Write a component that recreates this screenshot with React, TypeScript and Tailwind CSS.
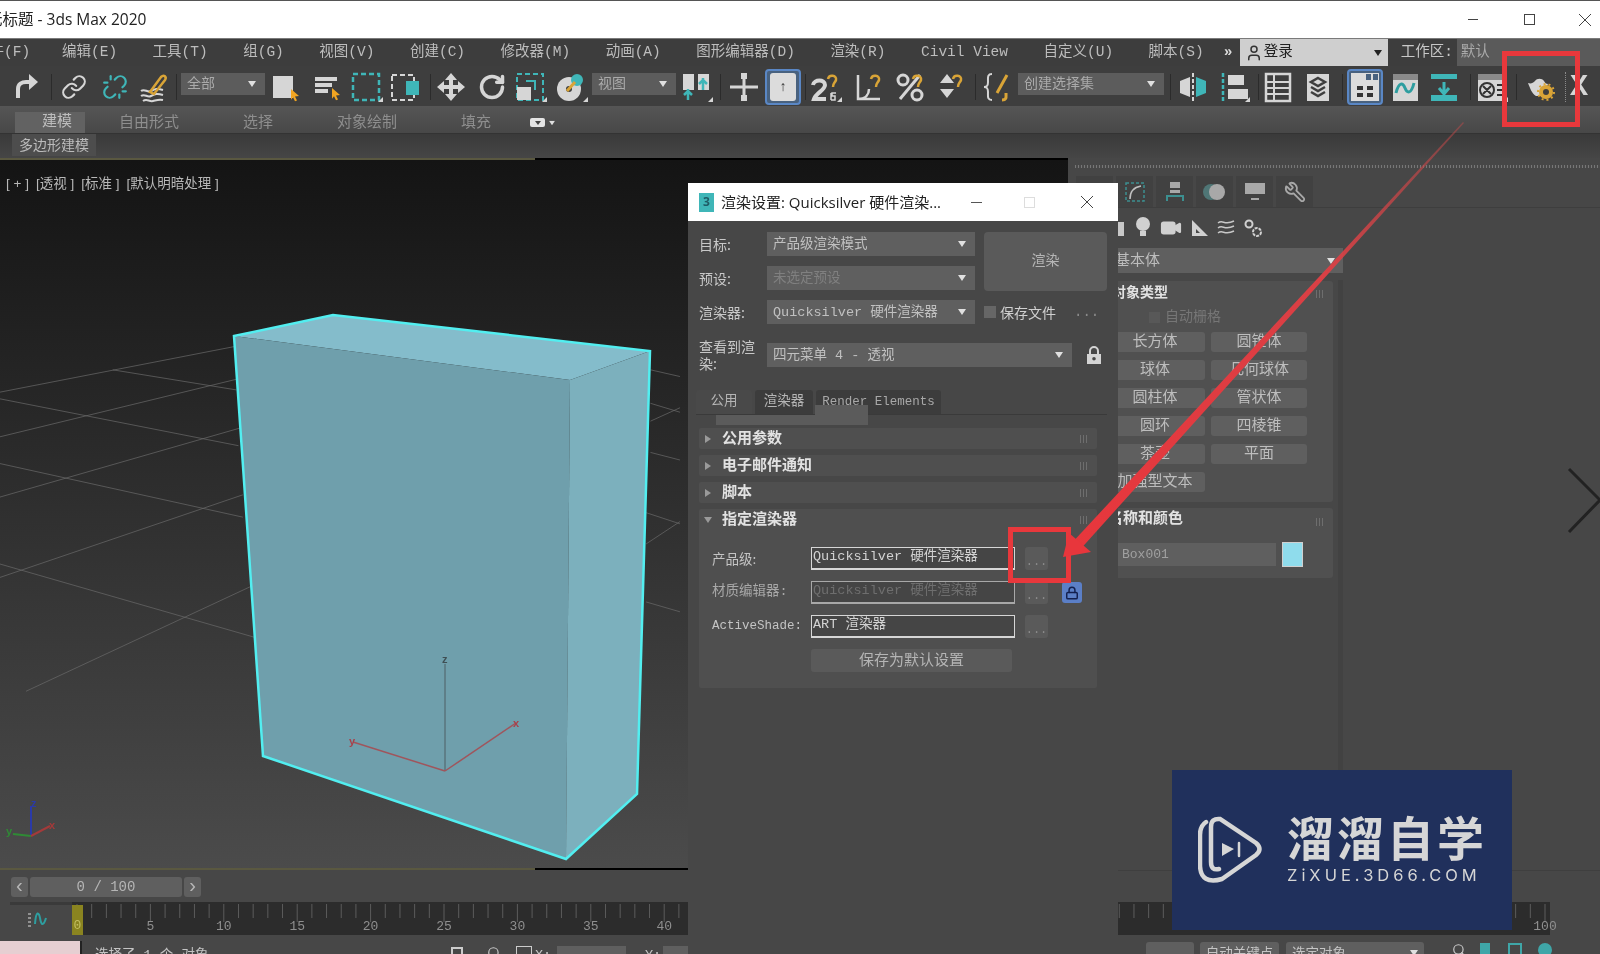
import type { ReactNode } from "react";
import { Link, Lock, RotateCw, Search, Unlink, User, Video, Wrench } from "lucide-react";

const TEAL = "#3fb6b8";
const GOLD = "#d9a437";
const LIGHT = "#d6d6d6";

const GRID_LINES = [
  [0, 520, 540, 418], [0, 620, 550, 490], [0, 755, 555, 600], [0, 935, 560, 750], [60, 1190, 590, 950],
  [0, 535, 550, 640], [0, 680, 560, 800], [0, 905, 590, 1070], [260, 470, 545, 515],
  [1500, 470, 1568, 485], [1500, 545, 1568, 565], [1500, 655, 1568, 672], [1490, 790, 1568, 815],
  [1490, 990, 1568, 1012], [1490, 860, 1568, 810], [1500, 585, 1568, 555],
];

const RULER_LABELS = [5, 10, 15, 20, 25, 30, 35, 40, 100];
const FRAME_PX = 14.68;

function Caret({ className = "" }: { className?: string }) {
  return (
    <svg width="8" height="6" viewBox="0 0 8 6" className={className}>
      <path d="M0 0h8L4 6z" fill="#e0e0e0" />
    </svg>
  );
}

function Tool({ className = "", children }: { className?: string; children: ReactNode }) {
  return (
    <div className={`flex h-[32px] w-[36px] shrink-0 items-center justify-center ${className}`}>
      <svg width="36" height="32" viewBox="0 0 36 32" fill="none">
        {children}
      </svg>
    </div>
  );
}

function LucideTool({ className = "", children }: { className?: string; children: ReactNode }) {
  return <div className={`flex h-[32px] w-[36px] shrink-0 items-center justify-center ${className}`}>{children}</div>;
}

function Sep({ className = "" }: { className?: string }) {
  return <div className={`h-[26px] w-px shrink-0 bg-[#2b2b2b] ${className}`} />;
}

function Pick({ x = 24, y = 21 }: { x?: number; y?: number }) {
  return <path d={`M${x} ${y}l8 7-4 .5 2 4-2 .8-2-4-2 2.5z`} fill="#f2a521" />;
}

function Corner() {
  return <path d="M35 31h-5l5-5z" fill={LIGHT} />;
}

function ToolDrop({ text, className }: { text: string; className: string }) {
  return (
    <div className={`flex h-[22px] shrink-0 -translate-y-[3px] items-center justify-between bg-[#5c5c5c] pl-[6px] pr-[9px] text-[14px] text-[#aaaaaa] ${className}`}>
      <span>{text}</span>
      <Caret />
    </div>
  );
}

function Toolbar() {
  return (
    <div className="flex h-[41px] items-center overflow-hidden border-b border-[#555555] bg-[#3e3e3e] pt-[2px]">
      <Tool className="-ml-[28px]">
        <path d="M26 27v-9c0-5-4-7-8-7h-5" stroke={LIGHT} strokeWidth="4" />
        <path d="M15 3l-9 8 9 8z" fill={LIGHT} />
      </Tool>
      <Tool className="ml-0">
        <path d="M10 27v-9c0-5 4-7 8-7h5" stroke={LIGHT} strokeWidth="4" />
        <path d="M21 3l9 8-9 8z" fill={LIGHT} />
      </Tool>
      <Sep className="ml-[7px]" />
      <LucideTool className="ml-[4px]"><Link size={26} color={LIGHT} /></LucideTool>
      <LucideTool className="ml-[5px]"><Unlink size={26} color={TEAL} /></LucideTool>
      <Tool className="ml-[2px]">
        <path d="M6 20c4-3 6 2 10 0s6-3 12-1M6 25c4-3 6 2 10 0s6-3 12-1M8 30c4-3 6 1 10 0s6-2 10-1" stroke={LIGHT} strokeWidth="2" />
        <path d="M15 21L26 6c3-3 6 0 4 3L19 23z" stroke={GOLD} strokeWidth="2.5" />
      </Tool>
      <Sep className="ml-[5px]" />
      <ToolDrop text="全部" className="ml-[4px] w-[84px]" />
      <Tool>
        <rect x="8" y="5" width="20" height="22" fill={LIGHT} />
        <Pick x={26} y={18} />
      </Tool>
      <Tool className="ml-[7px]">
        <path d="M7 6h22v4H7zM7 12h17v4H7zM7 18h13v4H7z" fill={LIGHT} />
        <Pick x={24} y={17} />
      </Tool>
      <Tool className="ml-[4px]">
        <rect x="5" y="3" width="26" height="26" stroke={TEAL} strokeWidth="2.5" strokeDasharray="5 3" />
        <Corner />
      </Tool>
      <Tool className="ml-[3px]">
        <rect x="5" y="4" width="22" height="25" stroke={LIGHT} strokeWidth="2" strokeDasharray="5 3" />
        <rect x="19" y="10" width="13" height="14" fill={TEAL} />
      </Tool>
      <Sep className="ml-[7px]" />
      <Tool className="ml-[2px]">
        <path d="M18 2l6 7h-4v5h5v-4l7 6-7 6v-4h-5v5h4l-6 7-6-7h4v-5h-5v4l-7-6 7-6v4h5V9h-4z" fill={LIGHT} />
      </Tool>
      <LucideTool className="ml-[5px]"><RotateCw size={28} color={LIGHT} strokeWidth={3} /></LucideTool>
      <Tool className="ml-[2px]">
        <rect x="5" y="3" width="26" height="26" stroke={TEAL} strokeWidth="2" strokeDasharray="5 3" />
        <rect x="5" y="16" width="14" height="13" fill={LIGHT} />
        <path d="M14 10h9v9" stroke={TEAL} strokeWidth="2" />
        <Corner />
      </Tool>
      <Tool className="ml-[5px]">
        <circle cx="16" cy="18" r="12" fill={LIGHT} />
        <circle cx="16" cy="18" r="3" fill="#3e3e3e" />
        <circle cx="24" cy="9" r="6" fill={TEAL} />
        <path d="M14 20l8-9" stroke={GOLD} strokeWidth="3" />
        <Corner />
      </Tool>
      <ToolDrop text="视图" className="ml-[3px] w-[84px]" />
      <Tool className="ml-[2px]">
        <path d="M5 3h11v16H5zM20 3h11v16H20z" fill={LIGHT} />
        <path d="M10 18v11M6 24l4-4 4 4M25 7v12M21 13l4-4 4 4" stroke={TEAL} strokeWidth="2.5" />
        <Corner />
      </Tool>
      <Sep className="ml-[6px]" />
      <Tool className="ml-[5px]">
        <path d="M4 16h28M18 3v26" stroke={LIGHT} strokeWidth="3" />
        <rect x="15" y="2" width="6" height="6" fill={LIGHT} />
        <rect x="15" y="24" width="6" height="6" fill={LIGHT} />
      </Tool>
      <div className="ml-[3px] flex h-[36px] w-[36px] shrink-0 items-center justify-center rounded-[4px] border-2 border-[#5a87c5] bg-[#49627f]">
        <div className="flex h-[28px] w-[26px] items-center justify-center rounded-[3px] bg-[#dcdcdc] text-[14px] font-bold leading-none text-[#333333]">↑</div>
      </div>
      <Sep className="ml-[4px]" />
      <Tool className="ml-[1px]">
        <path d="M6 14c1-6 12-6 12 0 0 5-9 8-11 14h12" stroke={LIGHT} strokeWidth="4" />
        <path d="M21 8c1-5 9-4 8 1-1 3-3 3-3 7" stroke={GOLD} strokeWidth="2.5" />
        <path d="M24 22v7M29 22h-4v3h3v4h-4" stroke={LIGHT} strokeWidth="1.5" />
        <Corner />
      </Tool>
      <Tool className="ml-[7px]">
        <path d="M8 4v24h22M8 28c8 0 11-5 11-10" stroke={LIGHT} strokeWidth="2.5" />
        <path d="M21 8c1-5 9-4 8 1-1 3-3 3-3 7" stroke={GOLD} strokeWidth="2.5" />
      </Tool>
      <Tool className="ml-[6px]">
        <circle cx="11" cy="9" r="5" stroke={LIGHT} strokeWidth="3" />
        <circle cx="25" cy="24" r="5" stroke={LIGHT} strokeWidth="3" />
        <path d="M8 28L28 4" stroke={LIGHT} strokeWidth="3" />
        <path d="M21 8c1-5 9-4 8 1-1 3-3 3-3 7" stroke={GOLD} strokeWidth="2.5" />
      </Tool>
      <Tool className="ml-[4px]">
        <path d="M8 12l7-9 7 9zM8 18l7 9 7-9z" fill={LIGHT} />
        <path d="M21 8c1-5 9-4 8 1-1 3-3 3-3 7" stroke={GOLD} strokeWidth="2.5" />
      </Tool>
      <Sep className="ml-[7px]" />
      <Tool className="ml-[3px]">
        <path d="M13 3c-5 0-4 4-4 8s-1 5-4 5c3 0 4 1 4 5s-1 8 4 8" stroke={LIGHT} strokeWidth="2" />
        <path d="M18 22L28 4M23 29c5 0 4-3 4-7" stroke={GOLD} strokeWidth="3" />
      </Tool>
      <ToolDrop text="创建选择集" className="ml-[3px] w-[146px]" />
      <Sep className="ml-[6px]" />
      <Tool className="ml-[4px]">
        <path d="M15 6L5 10v12l10 4z" fill={LIGHT} />
        <path d="M21 6l10 4v12l-10 4z" fill={TEAL} />
        <path d="M18 2v28" stroke={LIGHT} strokeWidth="2" strokeDasharray="4 2" />
      </Tool>
      <Tool className="ml-[4px]">
        <path d="M8 2v28" stroke={TEAL} strokeWidth="2.5" strokeDasharray="4 2" />
        <rect x="13" y="4" width="16" height="10" fill={LIGHT} />
        <rect x="13" y="18" width="20" height="10" fill={LIGHT} />
        <Corner />
      </Tool>
      <Sep className="ml-[7px]" />
      <Tool className="ml-[1px]">
        <rect x="6" y="3" width="24" height="27" stroke={LIGHT} strokeWidth="2.5" />
        <path d="M6 11h24M6 17h24M6 23h24M14 3v27" stroke={LIGHT} strokeWidth="2" />
      </Tool>
      <Tool className="ml-[4px]">
        <rect x="7" y="3" width="22" height="27" fill={LIGHT} />
        <path d="M18 7l7 4-7 4-7-4zM11 16l7 4 7-4M11 21l7 4 7-4" stroke="#3e3e3e" strokeWidth="2.5" />
      </Tool>
      <Sep className="ml-[6px]" />
      <div className="ml-[4px] flex h-[36px] w-[36px] shrink-0 items-center justify-center rounded-[4px] border-2 border-[#5a87c5] bg-[#49627f]">
        <svg width="30" height="30" viewBox="0 0 30 30" fill="none">
          <rect x="1" y="1" width="28" height="28" fill="#dcdcdc" />
          <path d="M7 14h6v4H7zM17 14h6v4h-6zM7 21h6v4H7zM17 21h6v4h-6z" fill="#333333" />
          <path d="M16 2h5v6h-5zM23 2h5v6h-5z" fill="#49627f" />
        </svg>
      </div>
      <Tool className="ml-[4px]">
        <rect x="6" y="3" width="25" height="27" fill={LIGHT} />
        <rect x="6" y="3" width="25" height="6" fill="#8a8a8a" />
        <path d="M9 22c3-12 7-10 9-5s6 7 9-5" stroke="#2e9ea0" strokeWidth="3" />
      </Tool>
      <Tool className="ml-[3px]">
        <path d="M5 3h26v5H5z" fill={TEAL} />
        <path d="M18 11v10M13 17l5 6 5-6" stroke={TEAL} strokeWidth="3" />
        <path d="M5 24h26v6H5z" fill={TEAL} />
      </Tool>
      <Sep className="ml-[8px]" />
      <Tool className="ml-[2px]">
        <rect x="5" y="3" width="26" height="27" fill={LIGHT} />
        <rect x="5" y="3" width="26" height="6" fill="#8a8a8a" />
        <circle cx="14" cy="19" r="7" stroke="#333333" strokeWidth="2" />
        <path d="M10 15l8 8M18 15l-8 8M24 14h6M24 19h6M24 24h6" stroke="#333333" strokeWidth="2" />
        <Corner />
      </Tool>
      <Sep className="ml-[7px]" />
      <Tool className="ml-[5px]">
        <path d="M6 12c3 1 5 0 7-2 2-3 7-3 9 0 1 2 2 3 4 3l-3 6-1 6h-8c-4-2-6-8-8-13z" fill={LIGHT} />
        <circle cx="24" cy="21" r="7" fill={GOLD} />
        <circle cx="24" cy="21" r="3" fill="#3e3e3e" />
        <circle cx="24" cy="21" r="8" stroke={GOLD} strokeWidth="2" strokeDasharray="2 3" />
      </Tool>
      <div className="ml-[7px] h-[30px] w-px shrink-0 border-l border-dotted border-[#8a8a8a]" />
      <div className="ml-[4px] w-[36px] shrink-0 text-[30px] font-bold leading-none text-[#d6d6d6]">X</div>
    </div>
  );
}

function MenuBar() {
  const items = ["编辑(E)", "工具(T)", "组(G)", "视图(V)", "创建(C)", "修改器(M)", "动画(A)", "图形编辑器(D)", "渲染(R)", "Civil View", "自定义(U)", "脚本(S)"];
  return (
    <div className="flex h-[28px] items-center overflow-hidden border-t border-[#7a7a7a] bg-[#3d3d3d] text-[14.5px] text-[#bdbdbd]">
      <span className="-ml-[25px] w-[87px] shrink-0">文件(F)</span>
      <div className="flex shrink-0 gap-[35.5px]">
        {items.map((item) => (
          <span key={item}>{item}</span>
        ))}
      </div>
      <span className="ml-[20px] w-[16px] shrink-0 font-bold text-[#dddddd]">»</span>
      <div className="flex h-[28px] w-[148px] shrink-0 items-center bg-[#cfcfcf] pl-[5px] pr-[6px] text-[#222222]">
        <User size={18} color="#333333" />
        <span className="ml-[1px] flex-1">登录</span>
        <svg width="8" height="6" viewBox="0 0 8 6"><path d="M0 0h8L4 6z" fill="#222222" /></svg>
      </div>
      <span className="ml-[13px] w-[56px] shrink-0 text-[#c8c8c8]">工作区:</span>
      <div className="flex h-[28px] flex-1 items-center bg-[#5a5a5a] pl-[4px] text-[#aaaaaa]">默认</div>
    </div>
  );
}

function RibbonTabs() {
  return (
    <>
      <div className="flex h-[26px] items-end bg-[linear-gradient(#555555,#484848)] pl-[15px] text-[15px] leading-[23px] text-[#8e8e8e]">
        <div className="flex h-[21px] w-[70px] items-center justify-center bg-[#626262] pl-[14px] text-[#bdbdbd]">建模</div>
        <span className="ml-[34px] h-[21px]">自由形式</span>
        <span className="ml-[64px] h-[21px]">选择</span>
        <span className="ml-[64px] h-[21px]">对象绘制</span>
        <span className="ml-[64px] h-[21px]">填充</span>
        <div className="mb-[6px] ml-[39px] flex items-center gap-[3px]">
          <div className="flex h-[9px] w-[15px] items-center justify-center rounded-[2px] bg-[#e4e4e4]">
            <div className="h-0 w-0 border-x-[3px] border-t-[4px] border-x-transparent border-t-[#444444]" />
          </div>
          <Caret className="scale-75" />
        </div>
      </div>
      <div className="flex h-[25px] items-start border-t border-[#333333] bg-[linear-gradient(#3a3a3a,#464646)] pl-[12px]">
        <div className="flex h-[22px] w-[84px] items-center justify-center bg-[#4d4d4d] pt-[2px] text-[14px] text-[#bbbbbb]">多边形建模</div>
      </div>
    </>
  );
}

function Viewport() {
  return (
    <div className="flex h-[712px] flex-col bg-[#151515]">
      <div className="flex h-[2px] shrink-0">
        <div className="w-[535px] bg-[#5a5840]" />
        <div className="flex-1 bg-black" />
      </div>
      <div className="relative flex-1 bg-[linear-gradient(#141414,#4b4b4b)]">
        <svg width="1068" height="708" viewBox="0 160 1068 708" className="absolute inset-0">
          {GRID_LINES.map(([a, b, c, d]) => (
            <line
              key={`${a}-${b}-${c}`}
              x1={a / 2.306}
              y1={b / 2.24 + 160}
              x2={c / 2.306}
              y2={d / 2.24 + 160}
              stroke="#6a6a6a"
              strokeWidth="1"
              opacity="0.7"
            />
          ))}
          <polygon points="234,336 333,315 650,351 570,380" fill="#84bccb" />
          <polygon points="234,336 570,380 566,859 263,756" fill="#6f9fac" />
          <polygon points="570,380 650,351 637,794 566,859" fill="#7cb0bd" />
          <polygon points="234,336 333,315 650,351 637,794 566,859 263,756" fill="none" stroke="#52eef0" strokeWidth="2.5" />
          <line x1="445" y1="771" x2="445" y2="664" stroke="#4f5f64" strokeWidth="1" />
          <line x1="445" y1="771" x2="516" y2="723" stroke="#a0555c" strokeWidth="1.5" />
          <line x1="445" y1="771" x2="353" y2="742" stroke="#a0555c" strokeWidth="1.5" />
          <text x="442" y="663" fontSize="11" fontWeight="700" fill="#3f4f54" fontFamily="Liberation Sans">z</text>
          <text x="513" y="727" fontSize="11" fontWeight="700" fill="#a8414b" fontFamily="Liberation Sans">x</text>
          <text x="349" y="745" fontSize="11" fontWeight="700" fill="#a8414b" fontFamily="Liberation Sans">y</text>
          <line x1="31" y1="836" x2="31" y2="806" stroke="#2a3aa8" strokeWidth="2" />
          <line x1="31" y1="836" x2="13" y2="834" stroke="#2f8a35" strokeWidth="2" />
          <line x1="31" y1="836" x2="50" y2="826" stroke="#a33a3a" strokeWidth="2" />
          <text x="31" y="807" fontSize="11" fontWeight="700" fill="#2a3aa8" fontFamily="Liberation Sans">z</text>
          <text x="6" y="835" fontSize="11" fontWeight="700" fill="#2f8a35" fontFamily="Liberation Sans">y</text>
          <text x="49" y="829" fontSize="11" fontWeight="700" fill="#a33a3a" fontFamily="Liberation Sans">x</text>
        </svg>
        <div className="absolute left-[6px] top-[14px] flex gap-[7px] font-['Liberation_Sans','Noto_Sans_CJK_SC',sans-serif] text-[13.5px] text-[#b8b8b8]">
          <span>[ + ]</span>
          <span>[透视 ]</span>
          <span>[标准 ]</span>
          <span>[默认明暗处理 ]</span>
        </div>
      </div>
      <div className="flex h-[2px] shrink-0">
        <div className="w-[535px] bg-[#5a5840]" />
        <div className="flex-1 bg-black" />
      </div>
    </div>
  );
}

function TimeSlider() {
  return (
    <div className="flex h-[32px] items-start gap-[2px] bg-[#474747] pl-[11px] pt-[7px] text-[14px] text-[#b5b5b5]">
      <div className="flex h-[20px] w-[17px] items-center justify-center rounded-[3px] bg-[#5f5f5f] text-[20px]">‹</div>
      <div className="flex h-[20px] w-[152px] items-center justify-center rounded-[3px] bg-[#5f5f5f]">0 / 100</div>
      <div className="flex h-[20px] w-[17px] items-center justify-center rounded-[3px] bg-[#5f5f5f] text-[20px]">›</div>
    </div>
  );
}

function Ruler() {
  return (
    <div className="flex h-[33px] bg-[#474747] pl-[10px]">
      <div className="flex w-[62px] items-center justify-center border-t-[3px] border-[#3a3a3a]">
        <svg width="24" height="20" viewBox="0 0 24 20" fill="none" className="-translate-x-[3px]">
          <path d="M2 4h3M2 8h3M2 12h3M2 16h3" stroke="#aaaaaa" strokeWidth="1.5" />
          <path d="M9 14c1-14 4-12 5-6s3 10 6 0" stroke="#2e9ea0" strokeWidth="2" />
        </svg>
      </div>
      <div className="relative w-[1478px] bg-[#2c2c2c] text-[13px] text-[#8f8f8f]">
        <svg width="1478" height="33" className="absolute inset-0">
          {Array.from({ length: 101 }, (_, i) => (
            <line key={i} x1={5 + i * FRAME_PX} y1="2" x2={5 + i * FRAME_PX} y2={i % 5 === 0 ? 20 : 16} stroke="#5c5c5c" strokeWidth="1" />
          ))}
        </svg>
        {RULER_LABELS.map((n) => (
          <span key={n} className="absolute top-[15px] -translate-x-1/2" style={{ left: 5 + n * FRAME_PX }}>
            {n}
          </span>
        ))}
        <div className="absolute left-0 top-[3px] flex h-[30px] w-[11px] items-end justify-center bg-[#8a8420] text-[13px] text-[#c2bd60]">0</div>
      </div>
    </div>
  );
}

function StatusBar() {
  return (
    <div className="mt-[2px] flex h-[17px] items-start overflow-hidden bg-[#474747] text-[13.5px] text-[#c4c4c4]">
      <div className="mt-[4px] h-[13px] w-[82px] shrink-0 border-r-2 border-[#222222] bg-[#e6cfd2]" />
      <span className="ml-[13px] mt-[9px] w-[340px] shrink-0 leading-[20px]">选择了 1 个 对象</span>
      <div className="ml-[16px] mt-[10px] h-[12px] w-[12px] border-x-2 border-t-2 border-[#cccccc]" />
      <Search size={14} color="#cccccc" className="ml-[24px] mt-[9px]" />
      <div className="ml-[15px] mt-[9px] h-[13px] w-[16px] border border-[#cccccc]" />
      <span className="ml-[3px] mt-[9px] w-[22px] leading-[20px]">X:</span>
      <div className="mt-[9px] h-[14px] w-[69px] bg-[#5f5f5f]" />
      <span className="ml-[19px] mt-[9px] w-[18px] leading-[20px]">Y:</span>
      <div className="mt-[9px] h-[14px] w-[69px] bg-[#5f5f5f]" />
      <span className="ml-[370px] mt-[9px] w-[40px] leading-[20px]">M</span>
      <div className="ml-[4px] mt-[5px] h-[17px] w-[48px] rounded-t-[3px] bg-[#5f5f5f]" />
      <div className="ml-[6px] mt-[5px] flex h-[17px] w-[79px] items-start justify-center rounded-t-[3px] bg-[#5f5f5f] pt-[3px]">自动关键点</div>
      <div className="ml-[7px] mt-[5px] flex h-[17px] w-[138px] items-start justify-between rounded-t-[3px] bg-[#5f5f5f] px-[6px] pt-[3px]">
        选定对象
        <Caret className="mt-[5px]" />
      </div>
      <Search size={14} color="#cccccc" className="ml-[28px] mt-[6px]" />
      <div className="ml-[14px] mt-[6px] h-[14px] w-[10px] bg-[#3fa6a8]" />
      <div className="ml-[18px] mt-[6px] h-[14px] w-[14px] border-2 border-[#3fa6a8]" />
      <div className="ml-[16px] mt-[6px] h-[14px] w-[14px] rounded-full bg-[#3fa6a8]" />
    </div>
  );
}

function PanelButton({ text, className }: { text: string; className: string }) {
  return (
    <div className={`flex h-[20px] items-center justify-center rounded-[3px] bg-[#5f5f5f] pt-[3px] text-[15px] text-[#bdbdbd] ${className}`}>
      {text}
    </div>
  );
}

function GripDots() {
  return <div className="h-[8px] w-[8px] bg-[repeating-linear-gradient(90deg,#6e6e6e_0_1px,transparent_1px_3px)]" />;
}

function CommandPanel() {
  const rows = [
    ["长方体", "圆锥体"],
    ["球体", "几何球体"],
    ["圆柱体", "管状体"],
    ["圆环", "四棱锥"],
    ["茶壶", "平面"],
  ];
  return (
    <div className="flex w-[532px] flex-col bg-[#474747] pt-[7px]">
      <div className="ml-[7px] h-[3px] shrink-0 bg-[repeating-linear-gradient(90deg,#777777_0_1px,#4a4a4a_1px_3px)]" />
      <div className="ml-[7px] mt-[8px] flex h-[32px] shrink-0 gap-[3px] border-b border-[#3e3e3e] pl-[1px]">
        {["create", "modify", "hierarchy", "motion", "display", "utility"].map((tab) => (
          <div key={tab} className="flex h-[31px] w-[37px] items-center justify-center bg-[#414141]">
            {tab === "modify" && (
              <svg width="22" height="24" viewBox="0 0 22 24" fill="none">
                <rect x="2" y="3" width="18" height="18" stroke="#3c8f90" strokeWidth="1.5" strokeDasharray="3 2" />
                <path d="M6 19c0-8 5-12 11-13" stroke="#c0c0c0" strokeWidth="1.5" />
              </svg>
            )}
            {tab === "hierarchy" && (
              <svg width="22" height="24" viewBox="0 0 22 24" fill="none">
                <rect x="6" y="2" width="10" height="6" fill="#a8a8a8" />
                <rect x="6" y="10" width="10" height="3" fill="#a8a8a8" />
                <path d="M3 21v-5h16v5" stroke="#3c8f90" strokeWidth="2" />
              </svg>
            )}
            {tab === "motion" && (
              <svg width="26" height="22" viewBox="0 0 26 22">
                <circle cx="9" cy="11" r="8" fill="#4f7676" />
                <circle cx="15" cy="11" r="8" fill="#a8a8a8" />
              </svg>
            )}
            {tab === "display" && (
              <svg width="24" height="22" viewBox="0 0 24 22">
                <rect x="2" y="2" width="20" height="11" fill="#a8a8a8" />
                <path d="M8 18h8" stroke="#a8a8a8" strokeWidth="2" />
              </svg>
            )}
            {tab === "utility" && <Wrench size={22} color="#a8a8a8" className="-scale-x-100" />}
          </div>
        ))}
      </div>
      <div className="ml-[38px] flex h-[38px] shrink-0 items-center gap-[7px] pt-[1px]">
        <svg width="20" height="20" viewBox="0 0 20 20"><rect x="4" y="4" width="14" height="14" fill="#c8c8c8" /></svg>
        <svg width="20" height="24" viewBox="0 0 20 24">
          <circle cx="10" cy="8" r="7" fill="#d0d0d0" />
          <rect x="7" y="15" width="6" height="5" fill="#d0d0d0" />
        </svg>
        <Video size={22} color="#d0d0d0" fill="#d0d0d0" />
        <svg width="20" height="20" viewBox="0 0 20 20" fill="none"><path d="M3 2v16h16zM7 11v4h4z" fill="#d0d0d0" fillRule="evenodd" /></svg>
        <svg width="20" height="20" viewBox="0 0 20 20" fill="none">
          <path d="M2 5c5-4 6 3 16-2M2 10c5-4 6 3 16-2M2 15c5-4 6 3 16-2" stroke="#c8c8c8" strokeWidth="1.5" />
        </svg>
        <svg width="20" height="20" viewBox="0 0 20 20" fill="none" stroke="#d0d0d0" strokeWidth="2">
          <circle cx="6" cy="6" r="3.5" />
          <circle cx="14" cy="14" r="4" strokeDasharray="3 1" />
        </svg>
      </div>
      <div className="ml-[12px] mt-[2px] flex h-[25px] w-[263px] shrink-0 items-center justify-between bg-[#5f5f5f] pl-[5px] pr-[8px] text-[15px] text-[#bdbdbd]">
        <span className="pt-[3px]">标准基本体</span>
        <Caret />
      </div>
      <div className="ml-[12px] flex h-[597px] shrink-0 pt-[7px]">
        <div className="w-[253px] pt-[1px]">
          <div className="h-[221px] rounded-[3px] bg-[#505050] pl-[25px]">
            <div className="flex h-[21px] items-end justify-between pl-[7px] pr-[9px] text-[14px] font-bold leading-[18px] text-[#e2e2e2]">
              对象类型
              <div className="mb-[4px]"><GripDots /></div>
            </div>
            <div className="flex h-[30px] items-center pl-[44px] text-[14px] text-[#767676]">
              <div className="mr-[5px] h-[11px] w-[11px] bg-[#585858]" />
              自动栅格
            </div>
            <div className="flex flex-col gap-[8px]">
              {rows.map(([a, b]) => (
                <div key={a} className="flex gap-[6px]">
                  <PanelButton text={a} className="w-[100px]" />
                  <PanelButton text={b} className="w-[96px]" />
                </div>
              ))}
              <PanelButton text="加强型文本" className="w-[100px]" />
            </div>
          </div>
          <div className="mt-[6px] h-[70px] rounded-[3px] bg-[#505050] pl-[25px]">
            <div className="flex h-[22px] items-end justify-between pl-[3px] pr-[9px] text-[15px] font-bold leading-[20px] text-[#e2e2e2]">
              名称和颜色
              <div className="mb-[4px]"><GripDots /></div>
            </div>
            <div className="mt-[12px] flex items-center gap-[6px]">
              <div className="flex h-[23px] w-[171px] items-center bg-[#5f5f5f] pl-[17px] text-[13px] text-[#a0a0a0]">Box001</div>
              <div className="h-[25px] w-[21px] border border-[#d0d0d0] bg-[#8fdcec]" />
            </div>
          </div>
        </div>
        <div className="ml-[5px] w-[5px] bg-[#424242]" />
      </div>
      <div className="flex-1 border-t border-[#3f3f3f]" />
    </div>
  );
}

function Select({ text, className, muted = false }: { text: string; className: string; muted?: boolean }) {
  return (
    <div className={`flex h-[24px] items-center justify-between bg-[#5f5f5f] pl-[6px] pr-[9px] text-[13.5px] ${muted ? "text-[#808080]" : "text-[#c0c0c0]"} ${className}`}>
      <span className="pt-[3px]">{text}</span>
      <Caret />
    </div>
  );
}

function FieldRow({ label, value, disabled = false, labelClass = "", extra }: { label: string; value: string; disabled?: boolean; labelClass?: string; extra?: ReactNode }) {
  return (
    <div className="flex h-[23px] items-center">
      <span className={`w-[99px] shrink-0 ${labelClass}`}>{label}</span>
      <div className={`flex h-[23px] w-[204px] shrink-0 items-start border border-b-2 bg-[#454545] pl-[1px] leading-[18px] ${disabled ? "border-[#a8a8a8] text-[#6e6e6e]" : "border-[#d6d6d6] text-[#d2d2d2]"}`}>
        {value}
      </div>
      <div className="ml-[10px] flex h-[23px] w-[23px] shrink-0 items-end justify-center rounded-[3px] bg-[#5a5a5a] pb-[2px] text-[12px] leading-[12px] text-[#8a8a8a]">...</div>
      {extra}
    </div>
  );
}

function Rollout({ title, open = false, children }: { title: string; open?: boolean; children?: ReactNode }) {
  return (
    <div className="rounded-[2px] bg-[#4f4f4f]">
      <div className="flex h-[21px] items-center pl-[6px] pr-[9px]">
        <svg width="6" height="8" viewBox="0 0 6 8" className={open ? "rotate-90" : ""}><path d="M0 0l6 4-6 4z" fill="#9a9a9a" /></svg>
        <span className="ml-[11px] flex-1 -translate-y-[2px] font-['Noto_Sans_CJK_SC',sans-serif] text-[15px] font-bold leading-[21px] text-[#e2e2e2]">{title}</span>
        <GripDots />
      </div>
      {children}
    </div>
  );
}

function RenderDialog() {
  return (
    <div className="absolute left-[688px] top-[183px] h-[771px] w-[430px] bg-[#474747] text-[14px] text-[#c8c8c8]">
      <div className="flex h-[38px] items-center bg-white font-['Open_Sans','Noto_Sans_CJK_SC',sans-serif] text-[15px] text-[#222222]">
        <div className="ml-[11px] flex h-[19px] w-[15px] items-center justify-center bg-[#3fb6b8] text-[12px] font-bold leading-none text-[#1f5c66]">3</div>
        <span className="ml-[7px] w-[246px] whitespace-nowrap">渲染设置: Quicksilver 硬件渲染...</span>
        <div className="h-px w-[11px] translate-x-[4px] bg-[#555555]" />
        <div className="ml-[46px] h-[11px] w-[11px] border border-[#dddddd]" />
        <svg width="12" height="12" viewBox="0 0 12 12" className="ml-[46px]"><path d="M0 0l12 12M12 0L0 12" stroke="#444444" strokeWidth="1" /></svg>
      </div>
      <div className="relative px-[11px] pt-[11px]">
        <div className="flex h-[92px]">
          <div className="flex w-[287px] flex-col gap-[10px]">
            <div className="flex h-[24px] items-center"><span className="w-[68px] font-['Noto_Sans_CJK_SC',sans-serif]">目标:</span><Select text="产品级渲染模式" className="w-[208px]" /></div>
            <div className="flex h-[24px] items-center"><span className="w-[68px] font-['Noto_Sans_CJK_SC',sans-serif]">预设:</span><Select text="未选定预设" muted className="w-[208px]" /></div>
            <div className="flex h-[24px] items-center"><span className="w-[68px] font-['Noto_Sans_CJK_SC',sans-serif]">渲染器:</span><Select text="Quicksilver 硬件渲染器" className="w-[208px]" /></div>
          </div>
          <div className="-ml-[2px] w-[123px]">
            <div className="flex h-[59px] items-center justify-center rounded-[4px] bg-[#5a5a5a] text-[#b5b5b5]">渲染</div>
            <div className="mt-[11px] flex h-[20px] items-center">
              <div className="h-[12px] w-[12px] bg-[#666666]" />
              <span className="ml-[4px] font-['Noto_Sans_CJK_SC',sans-serif] leading-[20px] text-[#d0d0d0]">保存文件</span>
              <span className="ml-[18px] text-[#8a8a8a]">...</span>
            </div>
          </div>
        </div>
        <div className="mt-[14px] flex h-[34px] items-center">
          <span className="w-[68px] pr-[6px] font-['Noto_Sans_CJK_SC',sans-serif] leading-[17px]">查看到渲染:</span>
          <Select text="四元菜单 4 - 透视" className="w-[305px]" />
          <svg width="16" height="20" viewBox="0 0 16 20" fill="none" className="ml-[14px]">
            <path d="M4 9V6a4 4 0 018 0v3" stroke="#d4d4d4" strokeWidth="2" />
            <path d="M1 9h14v10H1zM8 12a1.8 1.8 0 100 3.6A1.8 1.8 0 008 12z" fill="#d4d4d4" fillRule="evenodd" />
          </svg>
        </div>
        <div className="mt-[18px] -ml-[3px] flex h-[25px] items-end gap-[3px] border-b border-[#3a3a3a] text-[13.5px]">
          <div className="flex h-[24px] w-[56px] items-center justify-center rounded-t-[3px] bg-[#494949] text-[#b5b5b5]">公用</div>
          <div className="flex h-[24px] w-[58px] items-center justify-center rounded-t-[3px] bg-[#3c3c3c] text-[#b5b5b5]">渲染器</div>
          <div className="flex h-[24px] w-[125px] items-center justify-center rounded-t-[3px] bg-[#3c3c3c] text-[12.5px] text-[#a8a8a8]">Render Elements</div>
        </div>
        <div className="absolute left-[28px] top-[194px] h-[10px] w-[152px] bg-[#5b5b5b]" />
        <div className="absolute left-[127px] top-[184px] h-[10px] w-[53px] bg-[#5b5b5b]" />
        <div className="mt-[13px] flex w-[398px] flex-col gap-[6px]">
          <Rollout title="公用参数" />
          <Rollout title="电子邮件通知" />
          <Rollout title="脚本" />
          <Rollout title="指定渲染器" open>
            <div className="flex h-[158px] flex-col gap-[11px] pl-[13px] pt-[17px] text-[13.5px] text-[#c4c4c4]">
              <FieldRow label="产品级:" value="Quicksilver 硬件渲染器" labelClass="font-['Noto_Sans_CJK_SC',sans-serif]" />
              <FieldRow
                label="材质编辑器:"
                value="Quicksilver 硬件渲染器"
                disabled
                labelClass="text-[#a8a8a8]"
                extra={
                  <div className="ml-[14px] flex h-[21px] w-[20px] items-center justify-center rounded-[3px] bg-[#5b7fc7]">
                    <Lock size={14} color="#14204f" strokeWidth={2.5} />
                  </div>
                }
              />
              <FieldRow label="ActiveShade:" value="ART 渲染器" labelClass="text-[12.5px]" />
              <div className="ml-[99px] flex h-[23px] w-[201px] items-center justify-center rounded-[3px] bg-[#5a5a5a] pt-[4px] text-[15px] text-[#b5b5b5]">保存为默认设置</div>
            </div>
          </Rollout>
        </div>
      </div>
    </div>
  );
}

function Annotations() {
  return (
    <svg width="1600" height="954" viewBox="0 0 1600 954" className="pointer-events-none absolute inset-0" fill="none">
      <defs>
        <linearGradient id="shaft" x1="1463" y1="122" x2="1070" y2="552" gradientUnits="userSpaceOnUse">
          <stop offset="0" stopColor="#c44a4a" stopOpacity="0.45" />
          <stop offset="0.35" stopColor="#d94045" />
          <stop offset="1" stopColor="#e8363c" />
        </linearGradient>
      </defs>
      <rect x="1504.5" y="53.5" width="73" height="71" stroke="#e8383c" strokeWidth="5" />
      <rect x="1010.5" y="529.5" width="58" height="51" stroke="#e8383c" strokeWidth="5" />
      <polygon points="1463,122 1464,123 1077,553 1069,546" fill="url(#shaft)" />
      <polygon points="1063,557 1069,533 1091,552" fill="#e8363c" />
      <path d="M1569 469l31 31-31 32" stroke="#222222" strokeWidth="3" />
    </svg>
  );
}

function Watermark() {
  return (
    <div className="absolute left-[1172px] top-[770px] flex h-[160px] w-[340px] bg-[#20305c] pl-[26px] pt-[42px] text-[#d6d6d6]">
      <svg width="66" height="68" viewBox="0 0 66 68" fill="none" stroke="#d6d6d6" strokeWidth="4.5" strokeLinecap="round" className="mt-[4px]">
        <path d="M21 53Q13 55 13 46V11Q13 2 22 3L58 27Q65 33 58 39L24 63Q3 69 2 50V19Q2 10 8 6" />
        <path d="M24 27l12 6-12 7z" fill="#d6d6d6" stroke="none" />
        <path d="M41 27v13" strokeWidth="2.5" />
      </svg>
      <div className="ml-[23px] font-['Noto_Sans_CJK_SC',sans-serif]">
        <div className="text-[47px] font-bold leading-[48px] tracking-[3px]">溜溜自学</div>
        <div className="mt-[5px] font-['Inter',sans-serif] text-[16.5px] leading-[20px] tracking-[4px]">ZiXUE.3D66.COM</div>
      </div>
    </div>
  );
}

export default function App() {
  return (
    <div className="relative flex h-[954px] w-[1600px] flex-col overflow-hidden bg-[#474747] font-['Liberation_Mono','Noto_Sans_CJK_SC',monospace] text-[#bdbdbd] blur-[0.4px]">
      <div className="flex h-[38px] shrink-0 items-center border-t border-[#555555] bg-white font-['Open_Sans','Noto_Sans_CJK_SC',sans-serif] text-[15.5px] text-[#222222]">
        <span className="-ml-[13px] flex-1">无标题 - 3ds Max 2020</span>
        <div className="h-px w-[10px] bg-[#444444]" />
        <div className="ml-[46px] h-[11px] w-[11px] border border-[#444444]" />
        <svg width="12" height="12" viewBox="0 0 12 12" className="ml-[44px] mr-[9px]"><path d="M0 0l12 12M12 0L0 12" stroke="#444444" strokeWidth="1" /></svg>
      </div>
      <MenuBar />
      <Toolbar />
      <RibbonTabs />
      <div className="flex h-[744px] shrink-0">
        <div className="w-[1068px] shrink-0">
          <Viewport />
          <TimeSlider />
        </div>
        <CommandPanel />
      </div>
      <Ruler />
      <StatusBar />
      <RenderDialog />
      <Annotations />
      <Watermark />
    </div>
  );
}
